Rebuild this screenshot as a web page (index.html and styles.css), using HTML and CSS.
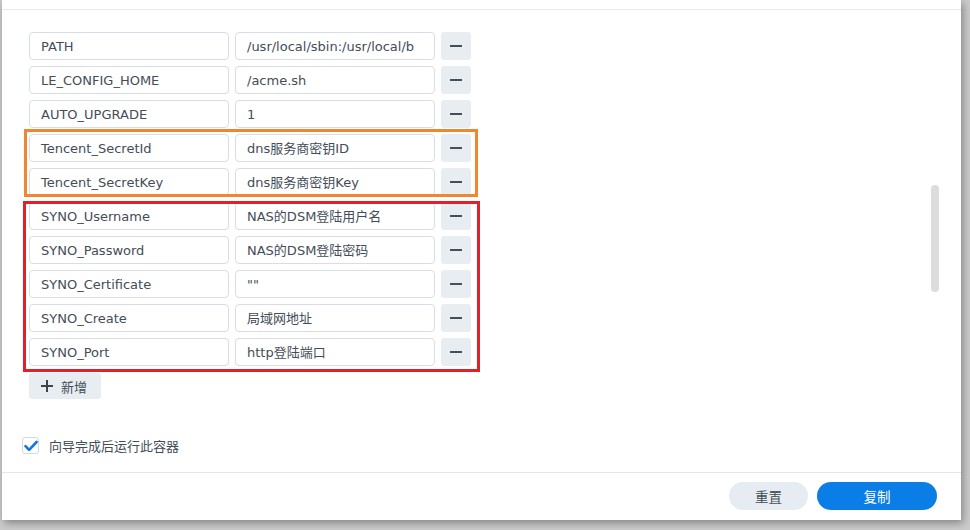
FILE: index.html
```html
<!DOCTYPE html>
<html lang="zh-CN">
<head>
    <meta charset="UTF-8">
    <meta name="viewport" content="width=device-width, initial-scale=1.0">
    <title>环境变量</title>
    <link rel="stylesheet" href="styles.css">
</head>
<body>
    <div class="dialog">
        <div class="dialog-head"></div>

        <div class="dialog-body">
            <div class="env-list">
                <div class="env-row">
                    <div class="field">PATH</div>
                    <div class="field">/usr/local/sbin:/usr/local/b</div>
                    <button class="remove-btn"><span class="minus"></span></button>
                </div>
                <div class="env-row">
                    <div class="field">LE_CONFIG_HOME</div>
                    <div class="field">/acme.sh</div>
                    <button class="remove-btn"><span class="minus"></span></button>
                </div>
                <div class="env-row">
                    <div class="field">AUTO_UPGRADE</div>
                    <div class="field">1</div>
                    <button class="remove-btn"><span class="minus"></span></button>
                </div>

                <div class="env-group group-dns">
                    <div class="env-row">
                        <div class="field">Tencent_SecretId</div>
                        <div class="field">dns服务商密钥ID</div>
                        <button class="remove-btn"><span class="minus"></span></button>
                    </div>
                    <div class="env-row">
                        <div class="field">Tencent_SecretKey</div>
                        <div class="field">dns服务商密钥Key</div>
                        <button class="remove-btn"><span class="minus"></span></button>
                    </div>
                </div>

                <div class="env-group group-syno">
                    <div class="env-row">
                        <div class="field">SYNO_Username</div>
                        <div class="field">NAS的DSM登陆用户名</div>
                        <button class="remove-btn"><span class="minus"></span></button>
                    </div>
                    <div class="env-row">
                        <div class="field">SYNO_Password</div>
                        <div class="field">NAS的DSM登陆密码</div>
                        <button class="remove-btn"><span class="minus"></span></button>
                    </div>
                    <div class="env-row">
                        <div class="field">SYNO_Certificate</div>
                        <div class="field">""</div>
                        <button class="remove-btn"><span class="minus"></span></button>
                    </div>
                    <div class="env-row">
                        <div class="field">SYNO_Create</div>
                        <div class="field">局域网地址</div>
                        <button class="remove-btn"><span class="minus"></span></button>
                    </div>
                    <div class="env-row">
                        <div class="field">SYNO_Port</div>
                        <div class="field">http登陆端口</div>
                        <button class="remove-btn"><span class="minus"></span></button>
                    </div>
                </div>
            </div>

            <button class="add-btn">
                <svg width="12" height="12" viewBox="0 0 12 12"><path d="M6 0v12M0 6h12" stroke="#3b4550" stroke-width="2"/></svg>
                新增
            </button>

            <label class="run-check">
                <span class="checkbox">
                    <svg width="14" height="12" viewBox="0 0 14 12"><path d="M1.5 6.2l3.6 3.6L12.6 2" fill="none" stroke="#1477dc" stroke-width="2.6" stroke-linecap="round" stroke-linejoin="round"/></svg>
                </span>
                向导完成后运行此容器
            </label>

            <div class="scrollbar"></div>
        </div>

        <div class="dialog-foot">
            <button class="btn btn-reset">重置</button>
            <button class="btn btn-primary">复制</button>
        </div>
    </div>
</body>
</html>
```

FILE: styles.css
```css
:root {
    --text: #434d57;
    --line: #d8dee4;
    --soft: #e8edf2;
    --blue: #0a7de6;
}

body {
    margin: 0;
    padding: 0;
    font-family: "DejaVu Sans", "Noto Sans CJK SC", sans-serif;
    font-size: 13px;
    color: var(--text);
    background: #cbcbcb;
    height: 530px;
    overflow: hidden;
}

.dialog {
    position: relative;
    width: 959px;
    height: 520px;
    margin-left: 2px;
    background: #fff;
    box-shadow: 2px 3px 8px rgba(0, 0, 0, 0.35);
    display: flex;
    flex-direction: column;
}

.dialog-head {
    height: 9px;
    border-bottom: 1px solid #e6e8ea;
}

.dialog-body {
    flex: 1;
    padding: 22px 0 0 27px;
}

.env-list {
    display: flex;
    flex-direction: column;
    align-items: flex-start;
    gap: 6px;
}

.env-group {
    position: relative;
    display: flex;
    flex-direction: column;
    gap: 6px;
}

.env-group::before {
    content: "";
    position: absolute;
    border: 3px solid;
    pointer-events: none;
}

.group-dns::before {
    top: -5px;
    left: -5px;
    right: -7px;
    bottom: -1px;
    border-color: #f0872f;
}

.group-syno::before {
    top: -1px;
    left: -6px;
    right: -9px;
    bottom: -6px;
    border-color: #e0202b;
}

.env-row {
    display: flex;
    gap: 6px;
}

.field {
    width: 200px;
    height: 28px;
    box-sizing: border-box;
    border: 1px solid var(--line);
    border-radius: 4px;
    padding: 1px 11px 0;
    line-height: 26px;
    white-space: nowrap;
    overflow: hidden;
}

.remove-btn {
    width: 30px;
    height: 28px;
    border: none;
    border-radius: 3px;
    background: var(--soft);
    display: flex;
    align-items: center;
    justify-content: center;
    padding: 0;
}

.minus {
    width: 12px;
    height: 2px;
    background: #45505b;
}

.add-btn {
    margin-top: 7px;
    height: 26px;
    width: 72px;
    border: none;
    border-radius: 3px;
    background: var(--soft);
    color: var(--text);
    font-family: inherit;
    font-size: 13px;
    display: flex;
    align-items: center;
    gap: 8px;
    padding: 0 0 0 12px;
}

.run-check {
    margin: 37px 0 0 -7px;
    display: flex;
    align-items: center;
    gap: 10px;
}

.checkbox {
    width: 15px;
    height: 15px;
    border: 1px solid #d3d9df;
    border-radius: 3px;
    display: flex;
    align-items: center;
    justify-content: center;
}

.scrollbar {
    position: absolute;
    top: 185px;
    left: 929px;
    width: 8px;
    height: 107px;
    border-radius: 4px;
    background: #dcdcdc;
}

.dialog-foot {
    height: 48px;
    box-sizing: border-box;
    border-top: 1px solid #e3e7eb;
    display: flex;
    justify-content: flex-end;
    align-items: flex-start;
    gap: 9px;
    padding: 9px 24px 0 0;
}

.btn {
    height: 28px;
    border: none;
    border-radius: 14px;
    font-family: inherit;
    font-size: 13.5px;
}

.btn-reset {
    width: 79px;
    background: #e6ecf2;
    color: var(--text);
}

.btn-primary {
    width: 120px;
    background: var(--blue);
    color: #fff;
}
```
